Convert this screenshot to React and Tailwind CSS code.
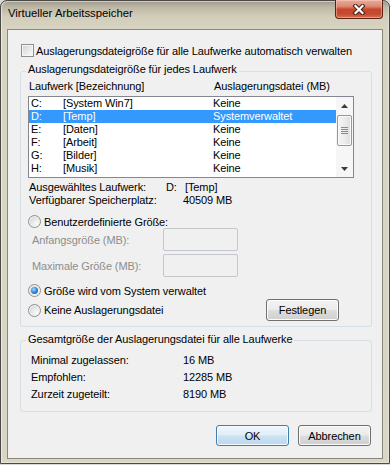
import React from 'react';

const drives = [
  ['C:', '[System Win7]', 'Keine'],
  ['D:', '[Temp]', 'Systemverwaltet'],
  ['E:', '[Daten]', 'Keine'],
  ['F:', '[Arbeit]', 'Keine'],
  ['G:', '[Bilder]', 'Keine'],
  ['H:', '[Musik]', 'Keine'],
];

const Checkbox = () => (
  <span className="w-[13px] h-[13px] shrink-0 border border-[#8e8f8f] bg-[linear-gradient(135deg,#cdd1d6_0%,#e9eaec_55%,#f9f9f9_100%)] shadow-[inset_0_0_0_1px_#f6f6f6]" />
);

const Radio = ({ checked }) => (
  <span className="w-[13px] h-[13px] shrink-0 rounded-full border border-[#8e8f8f] bg-[radial-gradient(circle_at_70%_70%,#fbfbfb_0%,#e4e4e4_50%,#c9c9c9_100%)] shadow-[inset_0_0_0_1px_#f4f4f4] flex items-center justify-center">
    {checked && (
      <span className="w-[7px] h-[7px] rounded-full bg-[radial-gradient(circle_at_40%_35%,#a6dcfd_0%,#3d8ad8_45%,#174f91_100%)]" />
    )}
  </span>
);

const Button = ({ children, primary, className = '' }) => (
  <div
    className={
      primary
        ? `h-[21px] w-[73px] flex items-center justify-center rounded-[3px] border border-[#3c7fb1] bg-[linear-gradient(180deg,#eef6fc_0%,#e0eef8_48%,#cbe2f3_52%,#bcd8ee_100%)] shadow-[inset_0_0_0_1px_#f4fafe] ${className}`
        : `h-[21px] w-[73px] flex items-center justify-center rounded-[3px] border border-[#707070] bg-[linear-gradient(180deg,#f2f2f2_0%,#ebebeb_48%,#dddddd_52%,#cfcfcf_100%)] shadow-[inset_0_0_0_1px_#fcfcfc] ${className}`
    }
  >
    {children}
  </div>
);

const CloseButton = () => (
  <div className="-mt-px w-[48px] h-[19px] rounded-b-[4px] border border-t-0 border-[#5a231a] bg-[linear-gradient(180deg,#e9ab9b_0%,#dc8a74_35%,#c8462c_52%,#c44a2f_78%,#d8714c_100%)] shadow-[inset_0_0_0_1px_rgba(255,215,200,0.45)] flex items-center justify-center">
    <svg width="14" height="11" viewBox="0 0 14 11">
      <path d="M3.5 2 L10.5 9 M10.5 2 L3.5 9" stroke="#4b2015" strokeWidth="4.2" strokeLinecap="square" />
      <path d="M3.5 2 L10.5 9 M10.5 2 L3.5 9" stroke="#ffffff" strokeWidth="2.2" strokeLinecap="square" />
    </svg>
  </div>
);

const Arrow = ({ down }) => (
  <svg width="7" height="4" viewBox="0 0 7 4">
    <path d={down ? 'M0 0 H7 L3.5 4 Z' : 'M0 4 H7 L3.5 0 Z'} fill="#3a3a3a" />
  </svg>
);

const Scrollbar = () => (
  <div className="w-[17px] h-full bg-[#f6f6f6] flex flex-col items-center">
    <div className="h-[17px] flex items-center justify-center">
      <Arrow />
    </div>
    <div className="mt-px w-[15px] h-[31px] rounded-[2px] border border-[#979797] bg-[linear-gradient(90deg,#f5f5f5_0%,#ececec_50%,#dcdcdc_100%)] shadow-[inset_0_0_0_1px_#fafafa] flex flex-col items-center justify-center gap-px">
      <span className="w-[7px] h-px bg-[#8a8a8a]" />
      <span className="w-[7px] h-px bg-[#8a8a8a]" />
      <span className="w-[7px] h-px bg-[#8a8a8a]" />
      <span className="w-[7px] h-px bg-[#8a8a8a]" />
    </div>
    <div className="flex-1" />
    <div className="h-[17px] flex items-center justify-center">
      <Arrow down />
    </div>
  </div>
);

export default function App() {
  return (
    <div className="w-[390px] h-[465px] bg-[#d9d9d6] font-['Liberation_Sans',Arial,sans-serif] text-[11px] tracking-[-0.1px] leading-[14px] text-black">
      <div className="h-[464px] border border-[#4a4945] rounded-t-[7px] px-[6px] pb-[4px] flex flex-col bg-[linear-gradient(180deg,#9c9789_0px,#bdb8a6_6px,#d3cebb_16px,#d8d4c3_30px,#dad6c7_100%)] shadow-[inset_1px_1px_0_rgba(255,255,255,0.5),inset_-1px_-1px_0_rgba(255,255,255,0.3)]">
        {/* title bar */}
        <div className="h-[28px] flex items-start justify-between">
          <span className="mt-[5px] ml-[1px] text-[11.3px] tracking-normal">Virtueller Arbeitsspeicher</span>
          <CloseButton />
        </div>

        {/* dialog body */}
        <div className="flex-1 border border-[#8b877a] bg-[#f0f0f0] flex flex-col">
          <div className="mt-[14px] ml-[13px] h-[13px] flex items-center gap-[2px]">
            <Checkbox />
            <span>Auslagerungsdateigröße für alle Laufwerke automatisch verwalten</span>
          </div>

          <fieldset className="mt-[5px] ml-[12px] mr-[10px] border border-[#d5dfe5] rounded-[3px] pb-[5px]">
            <legend className="ml-[5px] px-[2px] pb-[5px]">Auslagerungsdateigröße für jedes Laufwerk</legend>

            <div className="-mt-[2px] ml-[8px] h-[14px] flex">
              <span className="w-[185px]">Laufwerk [Bezeichnung]</span>
              <span>Auslagerungsdatei (MB)</span>
            </div>

            <div className="mt-[3px] ml-[7px] w-[326px] h-[82px] border border-[#828790] bg-white flex">
              <div className="w-[307px] flex flex-col">
                {drives.map(([drive, label, size]) => (
                  <div
                    key={drive}
                    className={
                      drive === 'D:'
                        ? 'h-[13px] leading-[13px] pl-[2px] flex bg-[#3399ff] text-white'
                        : 'h-[13px] leading-[13px] pl-[2px] flex'
                    }
                  >
                    <span className="w-[32px]">{drive}</span>
                    <span className="w-[150px]">{label}</span>
                    <span>{size}</span>
                  </div>
                ))}
              </div>
              <Scrollbar />
            </div>

            <div className="mt-[3px] ml-[8px] leading-[13px]">
              <div className="flex">
                <span className="w-[137px]">Ausgewähltes Laufwerk:</span>
                <span className="w-[19px]">D:</span>
                <span>[Temp]</span>
              </div>
              <div className="flex">
                <span className="w-[154px]">Verfügbarer Speicherplatz:</span>
                <span>40509 MB</span>
              </div>
            </div>

            <div className="mt-[8px] ml-[7px] h-[13px] flex items-center gap-[3px]">
              <Radio />
              <span>Benutzerdefinierte Größe:</span>
            </div>

            <div className="ml-[11px] h-[23px] flex items-center">
              <span className="w-[131px] text-[#8d8d8d]">Anfangsgröße (MB):</span>
              <div className="w-[75px] h-[23px] rounded-[2px] border border-[#c4c7cb] bg-[#f0f0f0]" />
            </div>
            <div className="mt-[3px] ml-[11px] h-[23px] flex items-center">
              <span className="w-[131px] text-[#8d8d8d]">Maximale Größe (MB):</span>
              <div className="w-[75px] h-[23px] rounded-[2px] border border-[#c4c7cb] bg-[#f0f0f0]" />
            </div>

            <div className="mt-[7px] ml-[7px] h-[13px] flex items-center gap-[3px]">
              <Radio checked />
              <span>Größe wird vom System verwaltet</span>
            </div>

            <div className="mt-[2px] h-[22px] pr-[32px] flex items-center justify-between">
              <div className="ml-[7px] flex items-center gap-[3px]">
                <Radio />
                <span>Keine Auslagerungsdatei</span>
              </div>
              <Button className="h-[22px]">Festlegen</Button>
            </div>
          </fieldset>

          <fieldset className="mt-[5px] ml-[12px] mr-[10px] border border-[#d5dfe5] rounded-[3px] pb-[8px]">
            <legend className="ml-[5px] px-[2px] pb-[2px]">Gesamtgröße der Auslagerungsdatei für alle Laufwerke</legend>
            <div className="mt-[4px] ml-[10px] leading-[17px]">
              <div className="flex">
                <span className="w-[152px]">Minimal zugelassen:</span>
                <span>16 MB</span>
              </div>
              <div className="flex">
                <span className="w-[152px]">Empfohlen:</span>
                <span>12285 MB</span>
              </div>
              <div className="flex">
                <span className="w-[152px]">Zurzeit zugeteilt:</span>
                <span>8190 MB</span>
              </div>
            </div>
          </fieldset>

          <div className="mt-[13px] mr-[11px] flex justify-end gap-[9px]">
            <Button primary>OK</Button>
            <Button>Abbrechen</Button>
          </div>
        </div>
      </div>
    </div>
  );
}
